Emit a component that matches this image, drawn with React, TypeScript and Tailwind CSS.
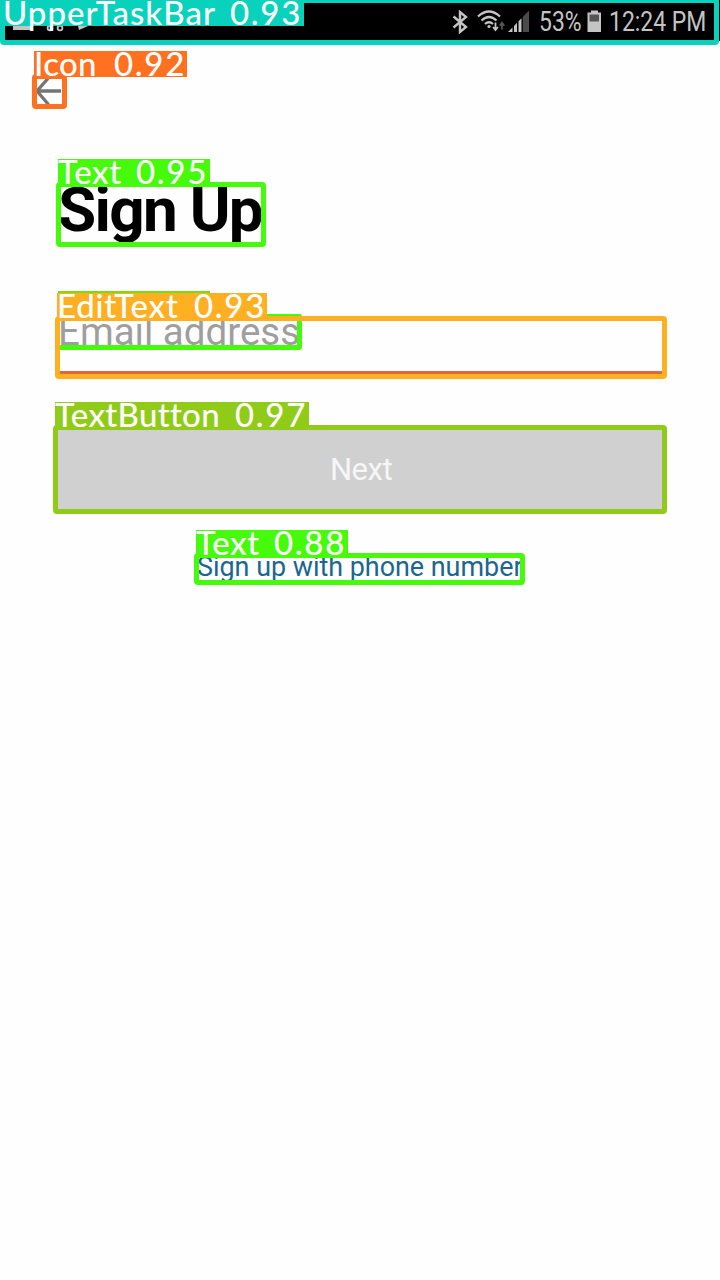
import type { ReactNode } from "react";

type DetectionProps = {
  label: string;
  score: string;
  box: string;
  tag: string;
  name: string;
  children?: ReactNode;
};

function Detection({ label, score, box, tag, name, children }: DetectionProps) {
  return (
    <section className={`relative border-[5px] ${box}`}>
      {children}
      <div
        className={`absolute z-10 flex h-[26px] font-[Lato,sans-serif] text-[33px] leading-[25px] font-medium whitespace-nowrap text-white ${tag}`}
      >
        <span className={`shrink-0 ${name}`}>{label}</span>
        <span className="tracking-[1.7px]">{score}</span>
      </div>
    </section>
  );
}

function Bluetooth() {
  return (
    <svg className="h-6 w-4" viewBox="0 0 16 24" fill="none" stroke="#c4c4c4" strokeWidth="2.4">
      <path d="M1.5 6.5 14 17l-6 5V2l6 5L1.5 17.5" />
    </svg>
  );
}

function Wifi() {
  return (
    <svg className="ml-[9px] h-6 w-7" viewBox="0 0 28 24" fill="none" stroke="#c4c4c4" strokeWidth="2.2">
      <path d="M1 6.5Q12-3.5 23 6.5M4.5 10.5Q12 3.5 19.5 10.5M8 14Q12 10.5 16 14" />
      <circle cx="12" cy="16.5" r="1.6" fill="#c4c4c4" stroke="none" />
      <path d="M18.5 12.5v7m-2.5-2.5 2.5 3 2.5-3" strokeWidth="1.8" />
      <path d="M25 19.5v-6m-2.3 2.3 2.3-3 2.3 3" stroke="#555" strokeWidth="1.8" />
    </svg>
  );
}

function Signal() {
  return (
    <svg className="ml-[3px] h-6 w-[22px]" viewBox="0 0 22 24">
      <path d="M14.8 7 21 .5V22h-6.2z" fill="#4b4b4b" />
      <path d="M0 22 4.5 17.4V22zM6 15.9l3-3.1V22H6zM10.5 11.3l3-3.1V22h-3z" fill="#c4c4c4" />
    </svg>
  );
}

function Battery() {
  return (
    <svg className="ml-[6px] h-6 w-[15px]" viewBox="0 0 15 24">
      <path d="M4 .5h7v2h3V22H.5V2.5H4z" fill="#c4c4c4" />
      <path d="M2.5 4.5h9.5v7H2.5z" fill="#555" />
    </svg>
  );
}

export default function App() {
  return (
    <main className="flex h-[1280px] w-[720px] flex-col items-start overflow-hidden bg-[#fefefe] font-[Roboto,sans-serif]">
      <header className="h-[45px] w-full bg-[linear-gradient(to_bottom,#000_41px,#fefefe_41px)]">
        <Detection
          label="UpperTaskBar"
          score="0.93"
          box="h-[45px] w-[719px] rounded-b-[4px] border-t-[3px] border-[#08d2bb] bg-black"
          tag="-left-[5px] -top-[3px] w-[304px] bg-[#08d2bb] pl-[3px]"
          name="w-[227px] tracking-[1px]"
        >
          <div className="flex h-full items-center">
            <svg className="h-full w-[90px]" viewBox="0 0 90 37">
              <path d="M8 23h20v4H8zM73 23h10l-9 4z" fill="#c4c4c4" />
              <g fill="none" stroke="#c4c4c4" strokeWidth="1.8">
                <circle cx="45" cy="25" r="2.4" />
                <circle cx="55" cy="25" r="2.4" />
              </g>
            </svg>
            <div className="mr-[9px] ml-auto flex items-center text-[27px] leading-9 text-[#c4c4c4]">
              <Bluetooth />
              <Wifi />
              <Signal />
              <span className="ml-[9px] w-[42px]">
                <span className="block origin-left scale-x-[.85]">53%</span>
              </span>
              <Battery />
              <span className="ml-[7px] w-[96px] whitespace-nowrap">
                <span className="block origin-left scale-x-[.85]">12:24 PM</span>
              </span>
            </div>
          </div>
        </Detection>
      </header>

      <nav className="mt-[29px] ml-8">
        <Detection
          label="Icon"
          score="0.92"
          box="h-[35px] w-[35px] rounded-[4px] border-[#ff7121] bg-white"
          tag="-left-[3px] -top-[28px] w-[153px] bg-[#ff7121]"
          name="w-[80px] tracking-[.3px]"
        >
          <svg className="h-[25px] w-[25px]" viewBox="0 0 25 25" fill="none" stroke="#757575" strokeWidth="3.3">
            <path d="M24 12H0M11-.5 0 12l11.5 13.5" />
          </svg>
        </Detection>
      </nav>

      <div className="mt-[73px] ml-14">
        <Detection
          label="Text"
          score="0.95"
          box="h-[65px] w-[210px] rounded-[4px] border-[#45fb0b]"
          tag="-left-[3px] -top-[28px] w-[152px] bg-[#45fb0b]"
          name="w-[78px] tracking-[.6px]"
        >
          <div className="h-full overflow-hidden">
            <h1 className="-ml-[3px] text-[62px] leading-[46px] font-bold tracking-[-1.7px] whitespace-nowrap text-black">
              Sign Up
            </h1>
          </div>
        </Detection>
      </div>

      <div className="mt-[69px] ml-[55px]">
        <Detection
          label="EditText"
          score="0.93"
          box="h-[63px] w-[612px] rounded-[4px] border-[#ffb022]"
          tag="-left-[3px] -top-[28px] w-[210px] bg-[#ffb022]"
          name="w-[137px] tracking-[.8px]"
        >
          <div className="h-full border-b-[3px] border-[#df6838]">
            <div className="h-6 w-[237px] overflow-hidden">
              <p className="-ml-[2px] text-[38.5px] leading-[22px] whitespace-nowrap text-[#9e9e9e]">
                Email address
              </p>
            </div>
          </div>
          <div className="absolute top-0 left-0 h-[29px] w-[242px] rounded-br-[4px] border-r-[5px] border-b-[5px] border-[#45fb0b]" />
          <div className="absolute -top-[7px] left-[207px] h-[2px] w-[35px] rounded-tr-[2px] bg-[#45fb0b]" />
          <div className="absolute -top-[30px] -left-[2px] h-[2px] w-[152px] bg-[#70e010]" />
        </Detection>
      </div>

      <div className="mt-[46px] ml-[53px]">
        <Detection
          label="TextButton"
          score="0.97"
          box="h-[89px] w-[614px] rounded-[4px] border-[#91cb19] bg-[#d0d0d0]"
          tag="-left-[3px] -top-[28px] w-[254px] bg-[#91cb19]"
          name="w-[180px] tracking-[.3px]"
        >
          <button className="flex h-full w-full items-center justify-center pt-[2px] pl-[2px] text-[31px] tracking-[-.5px] text-[#f6f6f6]">
            Next
          </button>
        </Detection>
      </div>

      <div className="mt-[39px] ml-[194px]">
        <Detection
          label="Text"
          score="0.88"
          box="h-8 w-[331px] rounded-[4px] border-[#45fb0b]"
          tag="-left-[3px] -top-[28px] w-[152px] bg-[#45fb0b]"
          name="w-[78px] tracking-[.6px]"
        >
          <div className="h-full overflow-hidden">
            <a className="-ml-[2px] block text-[26.9px] leading-[19px] whitespace-nowrap text-[#1a6691]">
              Sign up with phone number
            </a>
          </div>
        </Detection>
      </div>
    </main>
  );
}
